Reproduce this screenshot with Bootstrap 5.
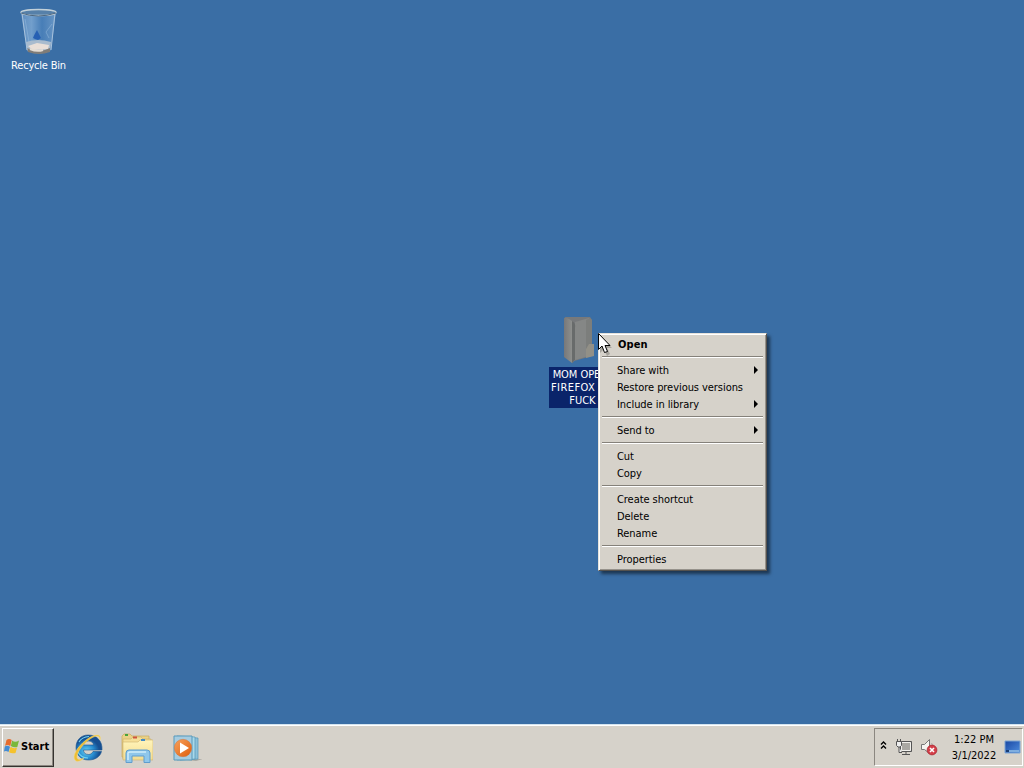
<!DOCTYPE html>
<html lang="en">
<head>
  <meta charset="UTF-8">
  <meta name="viewport" content="width=device-width, initial-scale=1.0">
  <title>Desktop</title>
  <link href="https://cdn.jsdelivr.net/npm/bootstrap@5.3.3/dist/css/bootstrap.min.css" rel="stylesheet">
  <style>
    body {
      background: #3a6ea5;
      color: #000;
      font: 11px/13px "DejaVu Sans Condensed", "DejaVu Sans", sans-serif;
      font-stretch: condensed;
      letter-spacing: -0.06px;
    }
    svg { display: block; flex: none; }

    /* desktop */
    .shortcut { position: absolute; width: 75px; color: #fff; text-align: center; }
    .shortcut svg { margin: 0 auto; }
    .bin { left: 1px; top: 7px; letter-spacing: -0.2px; }
    .bin svg { margin-left: 12px; }
    .folder { left: 549px; top: 314px; }
    .folder svg { margin-left: 12px; }
    .folder-name { background: #0a246a; padding: 1px 0 1px 1px; white-space: nowrap; }
    .folder-name span { display: block; margin-right: 1px; letter-spacing: 0.45px; }
    .pointer { position: absolute; left: 598px; top: 333px; z-index: 1100; }

    /* context menu */
    .context {
      --bs-dropdown-min-width: 169px;
      --bs-dropdown-bg: #d6d2ca;
      --bs-dropdown-font-size: 11px;
      --bs-dropdown-border-radius: 0;
      --bs-dropdown-link-color: #000;
      --bs-dropdown-link-hover-bg: #0a246a;
      --bs-dropdown-link-hover-color: #fff;
      left: 598px;
      top: 333px;
      width: 169px;
      border: 1px solid;
      border-color: #e6e3dc #55524e #55524e #e6e3dc;
      box-shadow: inset 1px 1px #fff, inset -1px -1px #96928b, 3px 3px 3px rgba(0, 0, 0, .5);
      padding: 2px;
    }
    .context .dropdown-item { height: 17px; line-height: 17px; padding: 0 6px 0 16px; }
    .context .dropdown-item.fw-bold { letter-spacing: 0.1px; padding-left: 17px; }
    .context .dropdown-divider { margin: 3px 1px 4px; border-top: 1px solid #85817a; border-bottom: 1px solid #fff; opacity: 1; height: 2px; }
    .context svg { fill: currentColor; margin-bottom: 2px; }

    /* taskbar */
    .taskbar { height: 44px; background: #d6d2ca; border-top: 1px solid #d4e4ef; box-shadow: inset 0 1px #fff; padding: 3px 1px 1px 2px; }
    .start {
      width: 52px; height: 39px; padding: 0 0 0 1px; gap: 2px;
      background: #d6d2ca; color: #000;
      border: 1px solid; border-color: #fff #35332f #35332f #fff; border-radius: 0;
      box-shadow: inset -1px -1px #8b8780;
      font-size: 11px; font-weight: 700; letter-spacing: 0;
    }
    .start svg { margin-bottom: 3px; }
    .quick { margin-left: 18px; gap: 17px; }
    .tray { width: 149px; height: 38px; border: 1px solid; border-color: #8b8780 #fff #fff #8b8780; padding-left: 5px; }
    .tray-status { gap: 8px; margin-left: 8px; }
    .clock { width: 50px; line-height: 16px; margin-left: 10px; padding-top: 1px; letter-spacing: 0; }
  </style>
</head>
<body class="vh-100 overflow-hidden d-flex flex-column">
  <svg width="0" height="0" class="position-absolute">
    <defs>
      <linearGradient id="glass"><stop stop-color="#6b98c8"/><stop offset=".3" stop-color="#85afd9"/><stop offset=".6" stop-color="#4c83bd"/><stop offset="1" stop-color="#79a4cf"/></linearGradient>
      <linearGradient id="front"><stop stop-color="#77787a"/><stop offset="1" stop-color="#969894"/></linearGradient>
      <radialGradient id="blue" cx=".4" cy=".65"><stop stop-color="#65d2f4"/><stop offset=".6" stop-color="#2589ce"/><stop offset="1" stop-color="#174f91"/></radialGradient>
      <linearGradient id="manila" x2="0" y2="1"><stop stop-color="#fff4ba"/><stop offset="1" stop-color="#f3dc90"/></linearGradient>
      <linearGradient id="orange" x2="1" y2="1"><stop stop-color="#f7a25d"/><stop offset="1" stop-color="#df5d0c"/></linearGradient>
      <linearGradient id="peek" x2="1" y2="1"><stop stop-color="#1947a3"/><stop offset="1" stop-color="#4e8edf"/></linearGradient>
    </defs>
  </svg>

  <main class="flex-grow-1 position-relative">
    <div class="shortcut bin">
      <svg width="48" height="52" viewBox="0 0 48 52">
        <path d="M8 6 43 5 38 43Q27 50 14 44Z" fill="url(#glass)" opacity=".75"/>
        <path d="M13 35Q25 31 38 35L37 44Q26 49 14 43Z" fill="#a9bbce"/>
        <path d="M15 39 24 36 36 38 35 42 20 43Z" fill="#eadfd8"/>
        <path d="M14 41Q26 47 37 41L37 45Q26 49 15 45Z" fill="#807c77"/>
        <path d="M17 42Q24 45 30 43" stroke="#e5ddd4" stroke-width="2" fill="none"/>
        <path d="M20 31Q21 28 24 23L27 29 28 31 25 33 22 32Z" fill="#2760b3"/>
        <path d="M12 12 16 35M39 17 33 25 36 31" fill="none" stroke="#a7c7e5" opacity=".4"/>
        <path d="M9 6 14 43M42 6 38 43" fill="none" stroke="#a8c2dc"/>
        <ellipse cx="25.500" cy="5.500" rx="17.500" ry="3" fill="#5680a9" stroke="#c3d1d9" stroke-width="1.400"/>
        <path d="M8 6Q25 12 43 6" fill="none" stroke="#4b6680"/>
      </svg>
      <div>Recycle Bin</div>
    </div>

    <div class="shortcut folder">
      <svg width="48" height="53" viewBox="0 0 48 53">
        <path d="M4 3 29 3 31 6V42L13 47Z" fill="#77797b"/>
        <path d="M14 8 28 4V42L14 46Z" fill="#858786"/>
        <path d="M25 6 29 4 31 6V41L25 42Z" fill="#7c7e7c"/>
        <path d="M3 4Q5 3 11 7L14 12V46L11 49 3 43Z" fill="url(#front)"/>
        <path d="M11 7Q15 9 14 14V46L11 49Z" fill="#686b6b"/>
        <path d="M28 30 33 30V42L25 44V35Z" fill="#929087"/>
      </svg>
      <div class="folder-name">MOM OPENED<span>FIREFOX AND</span>FUCK ..</div>
    </div>

    <ul class="dropdown-menu context show">
      <li><a class="dropdown-item fw-bold" href="#">Open</a></li>
      <li><hr class="dropdown-divider"></li>
      <li><a class="dropdown-item d-flex align-items-center justify-content-between" href="#">Share with <svg width="4" height="8" viewBox="0 0 4 8"><path d="M0 0 4 4 0 8Z"/></svg></a></li>
      <li><a class="dropdown-item" href="#">Restore previous versions</a></li>
      <li><a class="dropdown-item d-flex align-items-center justify-content-between" href="#">Include in library <svg width="4" height="8" viewBox="0 0 4 8"><path d="M0 0 4 4 0 8Z"/></svg></a></li>
      <li><hr class="dropdown-divider"></li>
      <li><a class="dropdown-item d-flex align-items-center justify-content-between" href="#">Send to <svg width="4" height="8" viewBox="0 0 4 8"><path d="M0 0 4 4 0 8Z"/></svg></a></li>
      <li><hr class="dropdown-divider"></li>
      <li><a class="dropdown-item" href="#">Cut</a></li>
      <li><a class="dropdown-item" href="#">Copy</a></li>
      <li><hr class="dropdown-divider"></li>
      <li><a class="dropdown-item" href="#">Create shortcut</a></li>
      <li><a class="dropdown-item" href="#">Delete</a></li>
      <li><a class="dropdown-item" href="#">Rename</a></li>
      <li><hr class="dropdown-divider"></li>
      <li><a class="dropdown-item" href="#">Properties</a></li>
    </ul>

    <svg class="pointer" width="16" height="24" viewBox="0 0 16 24">
      <path d="M2 3V20L6 16 9 23 12 21 9 15H14Z" fill="#000" opacity=".22"/>
      <path d="M.5.500V16.500L4 13 6.500 19.500 9.500 18.500 7 12.500H12Z" fill="#fff" stroke="#000"/>
    </svg>
  </main>

  <footer class="taskbar d-flex align-items-start">
    <button class="btn start d-flex align-items-center" type="button">
      <svg width="15" height="16" viewBox="0 0 15 16">
        <path d="M2.500 2Q5 0 7.700 2L6.300 8Q3 6 1 8Z" fill="#e66b2c"/>
        <path d="M8.200 2.500Q11 5 15 2.500L13.300 9Q10 10 6.800 8Z" fill="#79b83b"/>
        <path d="M.8 8.500Q3 7 6 8.700L4.500 14Q2 12.500 0 13.500Z" fill="#438bd2"/>
        <path d="M6.600 8.700Q9 11 13 9.700L11.500 15Q8 16 5 14.300Z" fill="#f5c22d"/>
      </svg>
      <span>Start</span>
    </button>
    <div class="quick d-flex align-items-center h-100">
      <svg width="32" height="32" viewBox="0 0 32 32">
        <path fill-rule="evenodd" d="M16 3C9 3 4 8 4 15.500S9 28 16.500 28C23 28 28 25 29.500 19.500H21C20 21.500 18.500 22.500 16.500 22.500 13 22.500 11.500 20.500 11.500 18H30C30.500 9 25 3 16 3ZM11.500 13C12 10 14 9 16.500 9S21.500 10.500 21.500 13Z" fill="url(#blue)" stroke="#195590" stroke-width=".6"/>
        <path d="M7 10Q10 5 17 4.500M6 20Q9 26 16 26" fill="none" stroke="#75d4f3" stroke-width="1.200"/>
        <path d="M28 8C30 1 22 2 14 8 5 15 0 24 3 28 5 31 10 28 12 26 8 28 5 28 5 25 5 20 11 12 18 7 24 3 28 3 28 8Z" fill="#edbd35" stroke="#f9dc72" stroke-width=".5"/>
      </svg>
      <svg width="32" height="32" viewBox="0 0 32 32">
        <path d="M1 4 3 2H9L11 4H28V25H1Z" fill="#ead287" stroke="#c8ac5f" stroke-width=".7"/>
        <path d="M2 7H10L12 5H20L22 7H30V27H2Z" fill="#f5df98" stroke="#c9ae66" stroke-width=".6"/>
        <path d="M2 10H17L19 8H32V28H2Z" fill="url(#manila)" stroke="#cdb36e" stroke-width=".6"/>
        <path d="M4 3H7" stroke="#48a33c" stroke-width="2"/><path d="M12 5.500H16" stroke="#cf5540" stroke-width="2"/><path d="M20 8H24" stroke="#438bc5" stroke-width="2"/>
        <path d="M5 30.500V21Q5 18 8 18H26Q29 18 29 21V30.500H23V24H11V30.500Z" fill="#8fc7eb" stroke="#5f9dce"/>
        <path d="M7 28V21Q7 20 9 20H25" fill="none" stroke="#d1eefa" stroke-width="1.500"/>
      </svg>
      <svg width="32" height="32" viewBox="0 0 32 32">
        <path d="M8 27H33L26 29Z" fill="#aaa9a2"/>
        <path d="M10 5 28 6V27L10 28Z" fill="#8cc1d9" stroke="#5596b8" stroke-width=".7"/>
        <path d="M7 4 25 5V27L7 28Z" fill="#aad8e9" stroke="#5596b8" stroke-width=".7"/>
        <path d="M4 4H22V28H4Z" fill="#a6cce0" stroke="#5799bc"/>
        <circle cx="13" cy="16" r="8.700" fill="url(#orange)" stroke="#ce733c" stroke-width=".5"/>
        <path d="M10 10.500V21.500L19 16Z" fill="#fff"/>
      </svg>
    </div>
    <div class="tray d-flex align-items-center ms-auto">
      <svg class="mb-1" width="7" height="9" viewBox="0 0 7 9"><path d="M1 3.500 3.500 1 6 3.500M1 7.500 3.500 5 6 7.500" fill="none" stroke="#000" stroke-width="1.400"/></svg>
      <div class="tray-status d-flex">
        <svg width="18" height="18" viewBox="0 0 18 18">
          <path d="M5.500 3.500H16.500V13.500H5.500Z" fill="#aaa8a3" stroke="#555"/>
          <path d="M6.500 12.500V4.500H15.500V12.500Z" fill="none" stroke="#f1f0ec"/>
          <path d="M11 14V16M7 16.500H15" stroke="#555"/>
          <path d="M2.500 1V4M5.500 1V4M1.500 3.500H6.500V7.500L5 9H3L1.500 7.500ZM4 9V14.500H7" fill="#eee" stroke="#555"/>
        </svg>
        <svg width="18" height="18" viewBox="0 0 18 18">
          <path d="M.5 6.500H3.500L8.500 1.500V15.500L3.500 11.500H.5Z" fill="#f4f3ef" stroke="#777"/>
          <path d="M10.500 5Q12 7 11.500 9" fill="none" stroke="#aaa"/>
          <circle cx="11" cy="12" r="4.900" fill="#d43f49" stroke="#a5232d" stroke-width=".7"/>
          <path d="M9 10 13 14M13 10 9 14" stroke="#fff" stroke-width="1.600"/>
        </svg>
      </div>
      <div class="clock text-center text-nowrap">1:22 PM<br>3/1/2022</div>
      <svg class="ms-auto" width="18" height="16" viewBox="0 0 18 16">
        <path d="M1 2H16V14H1Z" fill="url(#peek)" stroke="#7da4d1"/>
        <path d="M2 11H15V13H2Z" fill="#7faedf"/><path d="M2 11H5V13H2Z" fill="#193d74"/>
      </svg>
    </div>
  </footer>
  <script src="https://cdn.jsdelivr.net/npm/bootstrap@5.3.3/dist/js/bootstrap.bundle.min.js"></script>
</body>
</html>
